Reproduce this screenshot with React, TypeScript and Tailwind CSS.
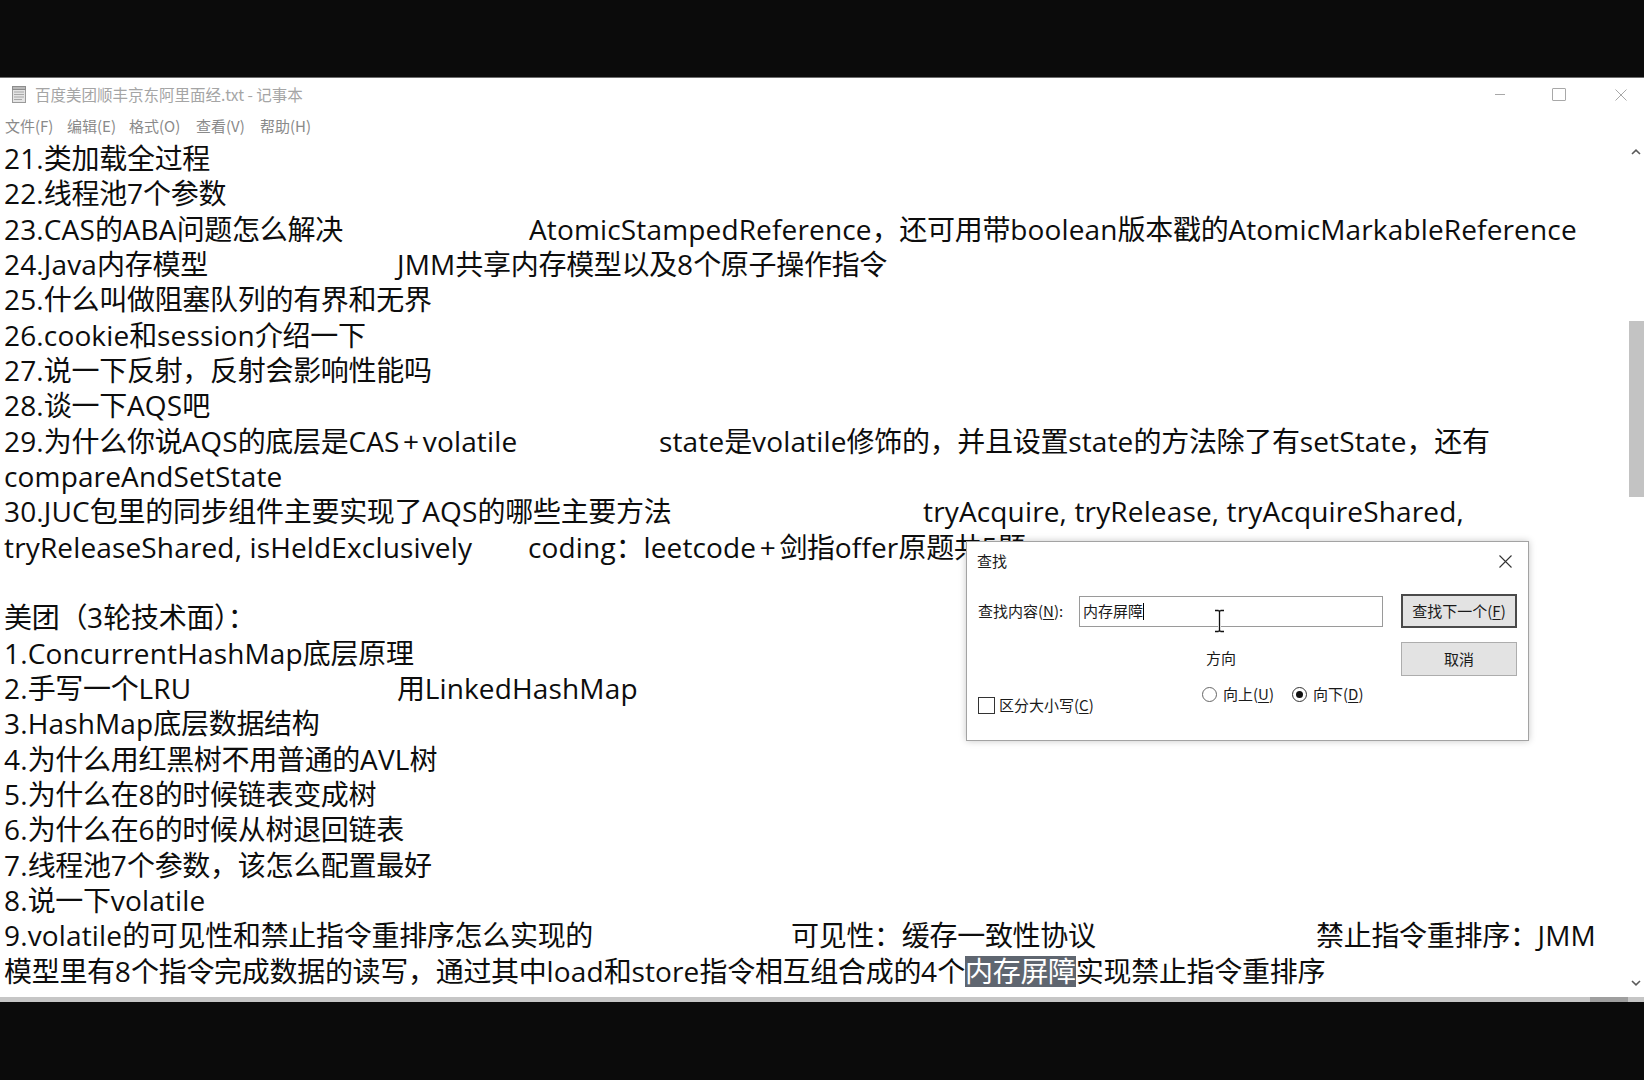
import React from "react";

const CJK = /([\u2E80-\u9FFF\uFF00-\uFFEF\u3000-\u303F]+|\+)/;

function T({ s }: { s: string }) {
  const parts = s.split(CJK).filter((p) => p !== "");
  return (
    <>
      {parts.map((p, i) =>
        p === "+" ? (
          <span key={i} className="mx-[3.5px]">+</span>
        ) : /[\u2E80-\u9FFF\uFF00-\uFFEF\u3000-\u303F]/.test(p) ? (
          <span key={i} className="tracking-[-0.3px]">{p}</span>
        ) : (
          <React.Fragment key={i}>{p}</React.Fragment>
        )
      )}
    </>
  );
}

const Line = ({ children }: { children?: React.ReactNode }) => (
  <div className="h-[35.33px] leading-[35.33px] whitespace-pre">{children}</div>
);

const U = ({ children }: { children: React.ReactNode }) => <span className="underline underline-offset-2">{children}</span>;

function NotepadIcon() {
  return (
    <svg width="18" height="19" viewBox="0 0 18 19">
      <rect x="2.5" y="2.5" width="13" height="15" fill="#e4e4e4" stroke="#9a9a9a" />
      <rect x="2.5" y="1.5" width="13" height="3" fill="#b9b9b9" stroke="#8d8d8d" />
      <path d="M4 7h10M4 9.5h10M4 12h10M4 14.5h8" stroke="#a8a8a8" strokeWidth="1" />
    </svg>
  );
}

function FindDialog() {
  return (
    <div className="absolute left-[966px] top-[541px] w-[563px] h-[200px] bg-white border border-[#a3a3a3] shadow-[0_0_7px_rgba(0,0,0,0.22)] text-[15px] text-[#1a1a1a] font-['Noto_Sans_CJK_SC',sans-serif]">
      <div className="h-[38px] flex items-center justify-between pl-[10px] pr-[16px]">
        <span>查找</span>
        <svg width="13" height="13" viewBox="0 0 13 13">
          <path d="M0.5 0.5L12.5 12.5M12.5 0.5L0.5 12.5" stroke="#333" strokeWidth="1.1" />
        </svg>
      </div>
      <div className="flex pl-[11px] pr-[11px] pt-[14px]">
        <div className="flex-1">
          <div className="flex items-center h-[34px]">
            <span className="w-[101px] whitespace-nowrap">查找内容(<U>N</U>):</span>
            <div className="relative w-[304px] h-[31px] border border-[#9a9a9a] flex items-center pl-[3px]">
              <span>内存屏障</span>
              <span className="w-[1px] h-[17px] bg-black" />
              <svg className="absolute left-[134px] top-[12px]" width="11" height="24" viewBox="0 0 11 24">
                <path d="M1 1.5h3.5M6.5 1.5H10M5.5 2.5v19M1 22.5h3.5M6.5 22.5H10M4.5 2h2M4.5 22h2" stroke="#fff" strokeWidth="3" />
                <path d="M1 1.5h3.5M6.5 1.5H10M5.5 2.5v19M1 22.5h3.5M6.5 22.5H10M4.5 2h2M4.5 22h2" stroke="#111" strokeWidth="1.3" />
              </svg>
            </div>
          </div>
          <div className="mt-[20px] pl-[228px] h-[20px] leading-[20px]">方向</div>
          <div className="flex">
            <div className="w-[224px] pt-[27px] flex items-center h-[47px] gap-[4px]">
              <div className="w-[17px] h-[17px] border border-[#333]" />
              <span className="leading-[20px]">区分大小写(<U>C</U>)</span>
            </div>
            <div className="pt-[16px] flex items-start">
              <div className="w-[90px] flex items-center gap-[6px] h-[20px]">
                <div className="w-[15px] h-[15px] rounded-full border border-[#666]" />
                <span>向上(<U>U</U>)</span>
              </div>
              <div className="flex items-center gap-[6px] h-[20px]">
                <div className="w-[15px] h-[15px] rounded-full border border-[#333] flex items-center justify-center">
                  <div className="w-[7px] h-[7px] rounded-full bg-[#111]" />
                </div>
                <span>向下(<U>D</U>)</span>
              </div>
            </div>
          </div>
        </div>
        <div className="w-[116px] flex flex-col gap-[14px]">
          <div className="h-[34px] border-2 border-[#4a4a4a] bg-[#e3e3e3] flex items-center justify-center whitespace-nowrap">
            查找下一个(<U>F</U>)
          </div>
          <div className="h-[34px] border border-[#adadad] bg-[#e3e3e3] flex items-center justify-center">取消</div>
        </div>
      </div>
    </div>
  );
}

export default function App() {
  return (
    <div className="relative w-[1644px] h-[1080px] bg-[#0b0b0b] flex flex-col overflow-hidden">
      <div className="h-[77px] shrink-0" />
      <div className="h-[925px] shrink-0 bg-white border-t border-[#6e6e6e] flex flex-col">
        {/* title bar */}
        <div className="h-[33px] shrink-0 flex items-center pl-[10px] font-['Noto_Sans_CJK_SC',sans-serif]">
          <NotepadIcon />
          <span className="ml-[7px] text-[15.5px] text-[#a5a5a5] whitespace-nowrap">百度美团顺丰京东阿里面经.txt - 记事本</span>
          <div className="ml-auto flex items-center pr-[17px]">
            <div className="w-[10px] h-[1px] bg-[#a8a8a8]" />
            <div className="ml-[47px] w-[14px] h-[13px] border border-[#a8a8a8] rounded-[1px]" />
            <svg className="ml-[49px]" width="12" height="12" viewBox="0 0 12 12">
              <path d="M0.5 0.5L11.5 11.5M11.5 0.5L0.5 11.5" stroke="#a8a8a8" strokeWidth="1" />
            </svg>
          </div>
        </div>
        {/* menu */}
        <div className="h-[30px] shrink-0 flex items-center pl-[5px] text-[15px] text-[#8a8a8a] font-['Noto_Sans_CJK_SC',sans-serif] whitespace-nowrap">
          <span className="w-[62px]">文件(F)</span>
          <span className="w-[62px]">编辑(E)</span>
          <span className="w-[67px]">格式(O)</span>
          <span className="w-[64px]">查看(V)</span>
          <span>帮助(H)</span>
        </div>
        {/* content */}
        <div className="flex-1 flex min-h-0">
          <div className="flex-1 pl-[4px] text-[28px] tracking-[0.15px] text-[#0d0d0d] font-['Open_Sans','Noto_Sans_CJK_SC',sans-serif]">
            <Line><T s="21.类加载全过程" /></Line>
            <Line><T s="22.线程池7个参数" /></Line>
            <Line>
              <span className="inline-block w-[525px]"><T s="23.CAS的ABA问题怎么解决" /></span>
              <T s="AtomicStampedReference，还可用带boolean版本戳的AtomicMarkableReference" />
            </Line>
            <Line>
              <span className="inline-block w-[393px]"><T s="24.Java内存模型" /></span>
              <T s="JMM共享内存模型以及8个原子操作指令" />
            </Line>
            <Line><T s="25.什么叫做阻塞队列的有界和无界" /></Line>
            <Line><T s="26.cookie和session介绍一下" /></Line>
            <Line><T s="27.说一下反射，反射会影响性能吗" /></Line>
            <Line><T s="28.谈一下AQS吧" /></Line>
            <Line>
              <span className="inline-block w-[655px]"><T s="29.为什么你说AQS的底层是CAS+volatile" /></span>
              <T s="state是volatile修饰的，并且设置state的方法除了有setState，还有" />
            </Line>
            <Line>compareAndSetState</Line>
            <Line>
              <span className="inline-block w-[919px]"><T s="30.JUC包里的同步组件主要实现了AQS的哪些主要方法" /></span>
              tryAcquire, tryRelease, tryAcquireShared,
            </Line>
            <Line>
              <span className="inline-block w-[524px]">tryReleaseShared, isHeldExclusively</span>
              <T s="coding：leetcode+剑指offer原题共5题" />
            </Line>
            <Line />
            <Line><T s="美团（3轮技术面）：" /></Line>
            <Line><T s="1.ConcurrentHashMap底层原理" /></Line>
            <Line>
              <span className="inline-block w-[393px]"><T s="2.手写一个LRU" /></span>
              <T s="用LinkedHashMap" />
            </Line>
            <Line><T s="3.HashMap底层数据结构" /></Line>
            <Line><T s="4.为什么用红黑树不用普通的AVL树" /></Line>
            <Line><T s="5.为什么在8的时候链表变成树" /></Line>
            <Line><T s="6.为什么在6的时候从树退回链表" /></Line>
            <Line><T s="7.线程池7个参数，该怎么配置最好" /></Line>
            <Line><T s="8.说一下volatile" /></Line>
            <Line>
              <span className="inline-block w-[787px]"><T s="9.volatile的可见性和禁止指令重排序怎么实现的" /></span>
              <span className="inline-block w-[525px]"><T s="可见性：缓存一致性协议" /></span>
              <T s="禁止指令重排序：JMM" />
            </Line>
            <Line>
              <T s="模型里有8个指令完成数据的读写，通过其中load和store指令相互组合成的4个" />
              <span className="inline-block leading-[31px] bg-[#5f6670] text-white tracking-[-0.3px]">内存屏障</span>
              <T s="实现禁止指令重排序" />
            </Line>
          </div>
          {/* vertical scrollbar */}
          <div className="w-[17px] shrink-0 flex flex-col">
            <div className="h-[22px] flex items-center justify-center">
              <svg width="10" height="6" viewBox="0 0 10 6">
                <path d="M1 5L5 1.2L9 5" fill="none" stroke="#5a5a5a" strokeWidth="1.6" />
              </svg>
            </div>
            <div className="h-[158px]" />
            <div className="h-[176px] w-[15px] ml-auto bg-[#c3c3c3]" />
            <div className="flex-1" />
            <div className="h-[28px] flex items-center justify-center">
              <svg width="10" height="6" viewBox="0 0 10 6">
                <path d="M1 1L5 4.8L9 1" fill="none" stroke="#5a5a5a" strokeWidth="1.6" />
              </svg>
            </div>
          </div>
        </div>
        <div className="h-[5px] shrink-0 bg-[#c6c6c6] flex">
          <div className="ml-[1590px] w-[38px] bg-[#9f9f9f]" />
        </div>
      </div>
      <FindDialog />
    </div>
  );
}
